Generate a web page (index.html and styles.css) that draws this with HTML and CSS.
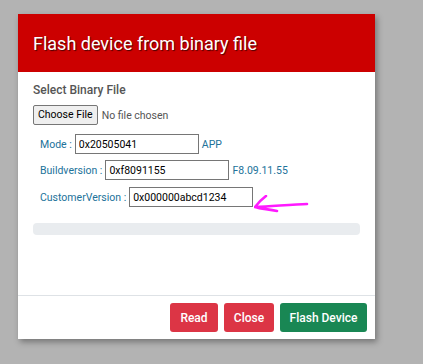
FILE: index.html
```html
<!DOCTYPE html>
<html>
<head>
<meta charset="utf-8">
<link rel="stylesheet" href="styles.css">
</head>
<body>
<div class="modal">
  <div class="modal-header">
    <h1 class="title">Flash device from binary file</h1>
  </div>
  <div class="modal-body">
    <div class="section-label">Select Binary File</div>
    <div class="file-row"><input class="file-input" type="file"></div>
    <div class="fields">
      <div class="field">
        <span class="field-label">Mode :</span>
        <input class="field-input" type="text" value="0x20505041">
        <span class="field-note">APP</span>
      </div>
      <div class="field">
        <span class="field-label">Buildversion :</span>
        <input class="field-input" type="text" value="0xf8091155">
        <span class="field-note">F8.09.11.55</span>
      </div>
      <div class="field">
        <span class="field-label">CustomerVersion :</span>
        <input class="field-input" type="text" value="0x000000abcd1234">
      </div>
    </div>
    <div class="progress"></div>
  </div>
  <div class="modal-footer">
    <button class="btn btn-red btn-read">Read</button>
    <button class="btn btn-red btn-close">Close</button>
    <button class="btn btn-green btn-flash">Flash Device</button>
  </div>
  <svg class="annot" width="60" height="24" viewBox="0 0 60 24">
    <path d="M53 9 C 40 9.5, 20 11, 1 12 M12 1 C 8 4, 4 8, 1 12 C 7 14, 14 14, 23 16" fill="none" stroke="#ff1aff" stroke-width="2.6" stroke-linecap="round" stroke-linejoin="round"/>
  </svg>
</div>
</body>
</html>
```
FILE: styles.css
```css
html, body {
  margin: 0;
  padding: 0;
}
body {
  background: #b3b3b3;
  font-family: Roboto, "Liberation Sans", Arial, sans-serif;
  width: 423px;
  height: 364px;
  overflow: hidden;
}
.modal {
  position: relative;
  margin: 14px 0 0 18px;
  width: 357px;
  height: 325px;
  background: #fff;
  box-shadow: 2px 3px 6px rgba(0,0,0,0.35);
  display: flex;
  flex-direction: column;
}
.modal-header {
  height: 58px;
  background: #cc0000;
  display: flex;
  align-items: center;
  padding-left: 15px;
  box-sizing: border-box;
}
.title {
  margin: 0;
  color: #fff;
  font-weight: 400;
  font-size: 18px;
  text-shadow: 1px 1px 1px rgba(60,0,0,0.9);
}
.modal-body {
  flex: 1;
  padding: 11px 15px 0 15px;
}
.section-label {
  font-size: 12px;
  font-weight: 500;
  color: #555;
  line-height: 14px;
}
.file-row {
  margin-top: 6px;
  height: 20px;
}
.file-input {
  font-family: Roboto, "Liberation Sans", Arial, sans-serif;
  font-size: 10.5px;
  color: #555;
}
.file-input::file-selector-button {
  font-family: Roboto, "Liberation Sans", Arial, sans-serif;
  font-size: 10.5px;
  color: #000;
  height: 20px;
  padding: 0 4px;
  margin-right: 4px;
  border: 1px solid #767676;
  border-radius: 2px;
  background: #efefef;
}
.fields {
  margin-top: 11px;
  padding-left: 7px;
  display: flex;
  flex-direction: column;
  gap: 6px;
}
.field {
  display: flex;
  align-items: center;
  gap: 3px;
  height: 20px;
}
.field:nth-child(3) {
  margin-top: 1px;
}
.field-label, .field-note {
  font-size: 10.5px;
  color: #21729a;
}
.field-input {
  width: 124px;
  height: 20px;
  box-sizing: border-box;
  border: 1px solid #767676;
  padding: 0 3px;
  font-family: Roboto, "Liberation Sans", Arial, sans-serif;
  font-size: 10.5px;
  color: #000;
  outline: none;
}
.progress {
  margin-top: 16px;
  height: 12px;
  background: #e9ecef;
  border-radius: 4px;
}
.modal-footer {
  border-top: 1px solid #dee2e6;
  display: flex;
  justify-content: flex-end;
  gap: 6px;
  padding: 7px 8px 7px 0;
}
.btn {
  height: 29px;
  border: none;
  border-radius: 3px;
  color: #fff;
  font-family: Roboto, "Liberation Sans", Arial, sans-serif;
  font-size: 12px;
  font-weight: 500;
  padding: 0;
}
.btn-red { background: #dc3545; }
.btn-green { background: #198754; }
.btn-read { width: 48px; }
.btn-close { width: 50px; }
.btn-flash { width: 87px; }
.annot {
  position: absolute;
  left: 236px;
  top: 181px;
}
```
